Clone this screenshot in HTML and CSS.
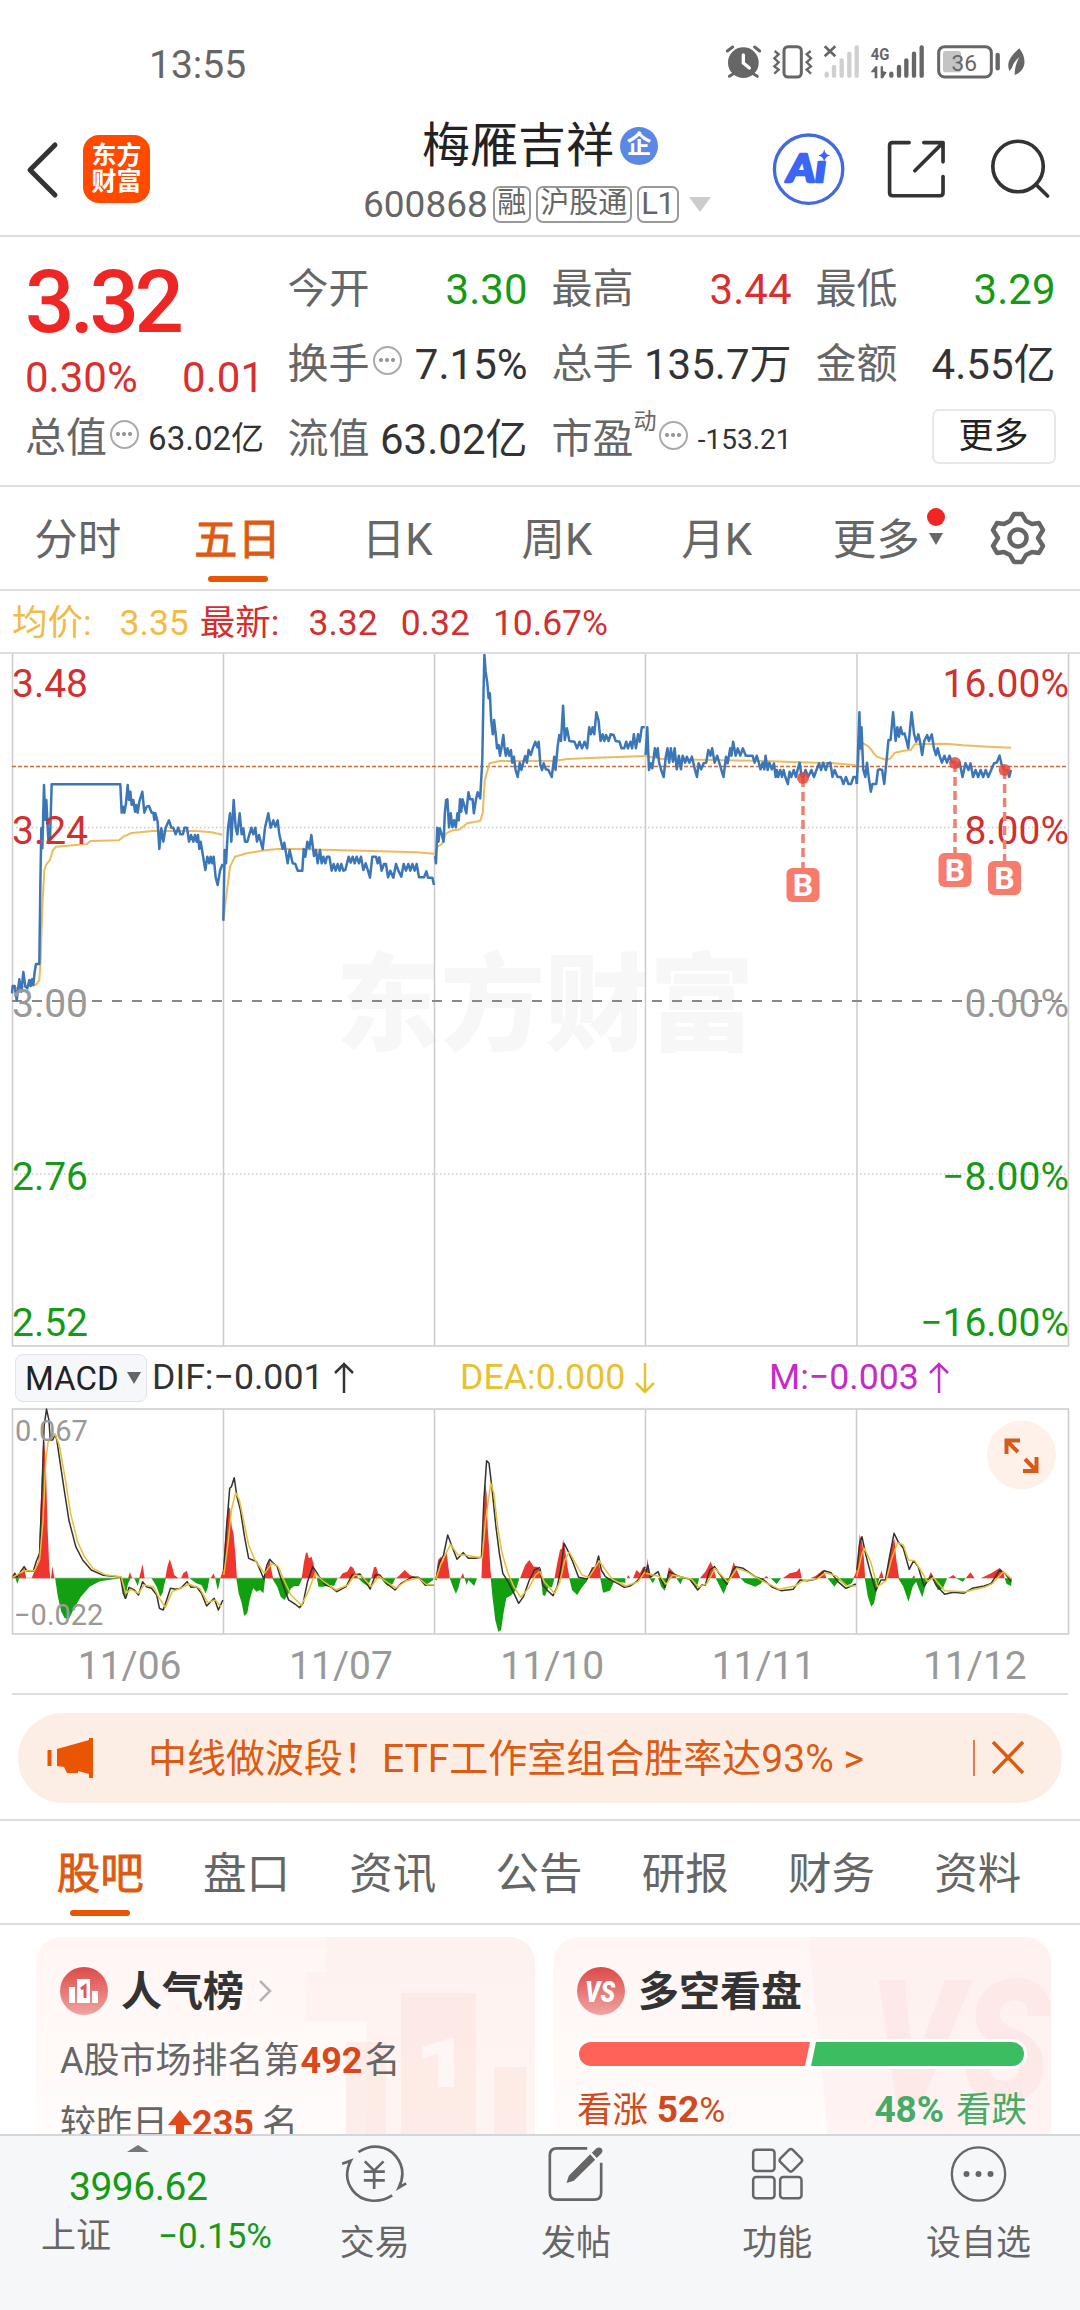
FILE: index.html
```html
<!DOCTYPE html>
<html lang="zh-CN">
<head>
  <meta charset="UTF-8">
  <title>梅雁吉祥 600868</title>
  <meta name="viewport" content="width=device-width, initial-scale=1.0">
  <link rel="stylesheet" href="styles.css">
</head>
<body>

  <div class="status-bar">
    <span class="clock">13:55</span>
    <svg class="status-icons" viewBox="0 35 930 120">
      <g fill="#666">
        <circle cx="70" cy="97" r="46"/>
        <path d="M38 132L28 138M102 132L112 138M22 62L38 50M104 50L119 62" stroke="#666" stroke-width="9" stroke-linecap="round"/>
        <path d="M70 74V98L88 113" fill="none" stroke="#fff" stroke-width="10" stroke-linecap="round"/>
      </g>
      <g fill="none" stroke="#666" stroke-width="9">
        <rect x="192" y="49" width="52" height="91" rx="12"/>
        <path d="M164 62L176 72L163 84L176 96L163 108L176 118L163 130M272 62L260 72L273 84L260 96L273 108L260 118L273 130" stroke-width="7"/>
      </g>
      <path d="M314 48L346 78M346 48L314 78" stroke="#666" stroke-width="8"/>
      <g stroke="#d0d0d0" stroke-width="13" stroke-linecap="round">
        <path d="M320 130V136M342 110V136M365 90V136M388 70V136M410 51V136"/>
      </g>
      <text x="452" y="88" class="net-text" textLength="56" lengthAdjust="spacingAndGlyphs">4G</text>
      <path d="M452 126L466 108H472V144H464V126ZM482 108H489V122L500 126L489 144H482Z" fill="#666"/>
      <g stroke="#666" stroke-width="13" stroke-linecap="round">
        <path d="M514 130V136M537 110V136M559 90V136M582 70V136M605 51V136"/>
      </g>
      <rect x="656" y="49" width="158" height="91" rx="18" fill="none" stroke="#666" stroke-width="9"/>
      <rect x="669" y="62" width="54" height="64" rx="8" fill="#c4c4c4"/>
      <text x="733" y="121" class="battery-text" text-anchor="middle">36</text>
      <path d="M833 74V114" stroke="#666" stroke-width="13" stroke-linecap="round"/>
      <path d="M898 54C872 78 858 96 868 122L876 112C880 98 888 90 898 80C890 96 884 110 884 134C916 122 924 88 898 54Z" fill="#666"/>
    </svg>
  </div>

  <header class="header">
    <svg class="back" viewBox="0 0 36 60"><path d="M31 5L6 30L31 55" fill="none" stroke="#333" stroke-width="5" stroke-linecap="round" stroke-linejoin="round"/></svg>
    <div class="app-logo">东方<br>财富</div>
    <div class="title">
      <div class="stock-name">梅雁吉祥<span class="company">企</span></div>
      <div class="stock-code">600868<span class="tag first">融</span><span class="tag">沪股通</span><span class="tag">L1</span><i class="caret"></i></div>
    </div>
    <svg class="header-icons" viewBox="150 300 850 235">
      <circle cx="265" cy="418" r="103" fill="#fff" stroke="#4169e1" stroke-width="10"/>
      <text x="200" y="456" class="ai-text" textLength="118" lengthAdjust="spacingAndGlyphs">Aı</text>
      <path d="M312 358Q315 374 330 377Q315 380 312 396Q309 380 294 377Q309 374 312 358Z" fill="#3b66f5"/>
      <g fill="none" stroke="#333" stroke-width="11" stroke-linecap="round" stroke-linejoin="round">
        <path d="M568 338H518Q509 338 509 347V489Q509 498 518 498H661Q670 498 670 489V440M612 338H670V396M670 338L585 423"/>
        <circle cx="896" cy="410" r="76"/>
        <path d="M950 464L985 499"/>
      </g>
    </svg>
  </header>

  <section class="quote">
    <div class="quote-main">
      <div class="price">3.32</div>
      <div class="change"><span>0.30%</span><span>0.01</span></div>
      <div class="cell small"><span class="label">总值<i class="dots"></i></span><span class="value">63.02亿</span></div>
    </div>
    <div class="quote-grid">
      <div class="cell"><span class="label">今开</span><span class="value green">3.30</span></div>
      <div class="cell"><span class="label">最高</span><span class="value red">3.44</span></div>
      <div class="cell"><span class="label">最低</span><span class="value green">3.29</span></div>
      <div class="cell"><span class="label">换手<i class="dots"></i></span><span class="value">7.15%</span></div>
      <div class="cell"><span class="label">总手</span><span class="value">135.7万</span></div>
      <div class="cell"><span class="label">金额</span><span class="value">4.55亿</span></div>
      <div class="cell"><span class="label">流值</span><span class="value">63.02亿</span></div>
      <div class="cell tiny"><span class="label">市盈<sup>动</sup><i class="dots"></i></span><span class="value">-153.21</span></div>
      <div class="cell end"><span class="more-btn">更多</span></div>
    </div>
  </section>

  <nav class="period-tabs">
    <span>分时</span>
    <span class="active">五日</span>
    <span>日K</span>
    <span>周K</span>
    <span>月K</span>
    <span class="more">更多<i class="dot"></i><i class="arrow"></i></span>
    <svg class="gear" viewBox="-30 -30 60 60" fill="none" stroke="#666" stroke-width="4.5" stroke-linejoin="round">
      <path d="M-4 -24H4L8 -17L14 -14L21 -15L25 -8L20 0L25 8L21 15L14 14L8 17L4 24H-4L-8 17L-14 14L-21 15L-25 8L-20 0L-25 -8L-21 -15L-14 -14L-8 -17Z"/>
      <circle r="8.5"/>
    </svg>
  </nav>

  <div class="chart-info">
    <span class="avg">均价:</span><span class="avg n1">3.35</span>
    <span class="l2">最新:</span><span class="n2">3.32</span><span class="n3">0.32</span><span class="n4">10.67%</span>
  </div>

  <svg class="price-chart" viewBox="0 654 1080 693">
    <text x="336" y="1042" class="watermark" textLength="418" lengthAdjust="spacingAndGlyphs">东方财富</text>
    <g class="grid-line">
      <path d="M12.5 654V1346H1068.5V654M223.5 654V1346M434.5 654V1346M645.5 654V1346M857 654V1346"/>
      <path d="M12 827.5H1068M12 1174H1068" stroke-dasharray="1.5 2.5"/>
    </g>
    <path d="M12 1001H1068" stroke="#888" stroke-width="2" stroke-dasharray="10 10"/>
    <path d="M12 766.5H1068" stroke="#cc6a3c" stroke-width="1.6" stroke-dasharray="4 2"/>

    <!-- average price -->
    <g class="line avg-line">
      <g transform="translate(0 640) scale(.33333)">
        <polyline points="40,1045 104,1036 112,1030 118,1020 122,960 127,800 133,690 138,675 150,660 158,632 168,620 260,612 272,603 357,601 370,590 395,579 460,573 590,573 635,577 667,584"/>
        <polyline points="670,842 680,760 690,680 705,650 740,640 800,630 845,626 920,628 1250,637 1302,641"/>
      </g>
      <g transform="translate(420 640) scale(.4209 .33333)">
        <polyline points="36,645 42,620 52,612 62,580 75,572 95,568 112,550 143,543 149,520 154,420 165,370 190,363 320,362 350,357 420,353 534,348"/>
        <polyline points="536,348 570,356 600,358 820,363 900,367 985,370 1036,376"/>
        <polyline points="1039,400 1045,330 1050,308 1066,320 1085,350 1108,360 1118,355 1128,338 1150,332 1166,330 1175,313 1250,311 1290,316 1350,320 1404,323"/>
      </g>
    </g>

    <!-- price -->
    <g class="line price-line">
      <g transform="translate(0 640) scale(.33333)">
        <polyline points="36,1060 38,1038 44,1038 50,1080 58,1018 64,1055 70,996 76,1040 82,1045 88,1020 92,1038 96,1018 100,1035 104,995 108,972 118,972 121,735 124,565 127,625 132,435 136,540 139,480 145,600 150,600 155,433 361,433 365,518 369,500 373,518 378,490 383,435 387,480 391,455 395,495 400,480 405,515 409,495 413,518 418,485 427,455 433,518 440,500 447,498 455,518 460,518 463,540 466,520 473,545 478,627 484,565 490,605 497,563 507,541 514,563 520,563 527,583 535,563 541,583 549,583 553,563 561,563 567,605 573,585 580,605 585,585 590,605 594,585 598,627 602,605 616,690 622,650 628,670 632,650 637,670 641,650 647,712 653,735 660,692 668,672"/>
        <polyline points="670,842 674,630 678,670 684,565 690,520 694,605 701,480 707,563 712,583 719,520 725,583 730,565 735,605 742,605 754,563 760,583 766,563 771,605 777,585 788,627 795,563 805,520 812,563 820,541 826,560 833,541 838,583 843,605 848,627 853,608 863,670 869,630 878,670 886,672 893,692 907,692 911,627 916,650 922,605 928,625 934,585 942,648 948,630 953,670 960,630 965,670 970,650 976,670 981,650 988,650 995,692 1001,672 1007,692 1013,672 1019,692 1024,672 1030,692 1036,690 1046,650 1052,668 1058,650 1064,670 1070,650 1077,670 1083,650 1090,690 1097,670 1104,692 1110,713 1117,650 1128,650 1133,670 1138,652 1145,692 1152,672 1158,672 1164,712 1171,692 1180,713 1188,672 1195,692 1204,710 1211,672 1218,692 1225,672 1231,692 1237,672 1244,692 1250,672 1257,712 1272,712 1279,694 1284,713 1297,713 1302,735"/>
      </g>
      <g transform="translate(420 640) scale(.4209 .33333)">
        <polyline points="36,648 38,670 41,563 44,605 47,565 52,585 56,605 59,520 62,480 65,478 69,562 73,520 77,562 81,541 85,562 89,520 92,541 95,478 98,515 101,478 106,500 110,520 115,457 119,478 125,478 128,520 133,478 137,457 143,475 148,360 151,150 153,45 156,95 160,130 163,175 166,160 169,240 173,283 176,240 180,283 183,325 187,315 190,347 194,320 198,285 201,325 204,347 208,325 212,347 216,330 219,368 223,350 227,390 232,411 237,368 241,390 246,365 250,348 254,368 258,330 263,345 268,325 274,305 279,322 282,305 286,375 290,390 294,370 299,388 305,390 313,411 319,350 322,390 327,320 331,285 335,303 340,197 344,300 349,265 355,303 367,305 373,325 379,305 385,325 391,305 397,325 402,262 406,283 410,262 414,283 419,217 424,240 429,303 434,283 438,303 442,285 448,303 453,283 460,285 465,303 474,305 479,325 485,325 490,305 494,325 500,305 504,325 508,283 513,325 518,283 522,305 527,262 534,262"/>
        <polyline points="536,345 540,262 544,390 548,370 552,385 558,325 562,350 565,325 568,368 573,390 579,411 584,350 588,325 592,368 596,325 601,365 605,325 610,388 615,347 620,388 624,347 630,368 634,350 640,368 646,350 653,388 658,411 662,370 668,388 674,370 680,368 685,330 690,347 694,325 700,368 706,347 711,368 716,390 721,411 727,350 731,370 737,325 740,347 744,305 750,347 755,325 761,347 767,325 774,347 790,347 795,368 800,347 805,368 809,388 814,368 818,388 821,347 826,390 830,368 836,388 841,370 845,411 848,390 851,411 856,390 860,411 864,390 868,411 874,432 878,395 882,411 888,390 893,411 897,390 902,368 906,405 910,413 916,390 922,411 930,390 936,411 942,390 948,370 953,390 958,368 964,390 969,370 975,368 980,411 985,390 992,411 1000,411 1006,432 1012,411 1018,432 1024,432 1030,411 1036,411 1038,432"/>
        <polyline points="1038,432 1044,217 1046,325 1049,262 1053,388 1058,411 1062,368 1066,411 1071,455 1075,432 1084,432 1088,390 1092,388 1098,390 1103,432 1108,368 1113,300 1118,300 1124,217 1130,303 1134,262 1138,290 1142,262 1146,283 1151,280 1156,303 1160,325 1168,217 1174,283 1179,305 1184,283 1188,305 1193,345 1198,303 1205,285 1209,303 1216,283 1221,325 1226,345 1230,325 1235,350 1240,368 1246,347 1252,368 1258,347 1264,368 1270,365 1276,380 1282,368 1289,411 1296,370 1303,390 1308,370 1314,411 1320,390 1326,411 1332,390 1338,411 1344,390 1350,411 1357,390 1364,370 1370,368 1377,347 1382,375 1389,390 1396,390 1400,411 1404,390"/>
      </g>
    </g>

    <g class="axis">
      <text x="12" y="697" class="up">3.48</text>
      <text x="12" y="844" class="up">3.24</text>
      <text x="12" y="1017" class="flat">3.00</text>
      <text x="12" y="1190" class="down">2.76</text>
      <text x="12" y="1336" class="down">2.52</text>
      <g text-anchor="end">
        <text x="1069" y="697" class="up">16.00%</text>
        <text x="1069" y="844" class="up">8.00%</text>
        <text x="1069" y="1017" class="flat">0.00%</text>
        <text x="1069" y="1190" class="down">−8.00%</text>
        <text x="1069" y="1336" class="down">−16.00%</text>
      </g>
    </g>

    <!-- buy marks -->
    <g class="marks">
      <path d="M803 778V868M955 763V853M1004.600 770V861"/>
      <circle cx="803" cy="778" r="6"/><circle cx="955" cy="763" r="6"/><circle cx="1004.600" cy="770" r="6"/>
      <rect x="786.500" y="868" width="33" height="34" rx="6"/><text x="803" y="896">B</text>
      <rect x="938.500" y="853" width="33" height="34" rx="6"/><text x="955" y="881">B</text>
      <rect x="988" y="861" width="33" height="34" rx="6"/><text x="1004.500" y="889">B</text>
    </g>
  </svg>

  <div class="macd-legend">
    <span class="macd-btn">MACD<i class="arrow"></i></span>
    <span class="dif">DIF:−0.001<svg class="trend" viewBox="0 0 20 32"><path d="M10 31V2M1 11L10 2L19 11"/></svg></span>
    <span class="dea">DEA:0.000<svg class="trend" viewBox="0 0 20 32"><path d="M10 1V30M1 21L10 30L19 21"/></svg></span>
    <span class="m">M:−0.003<svg class="trend" viewBox="0 0 20 32"><path d="M10 31V2M1 11L10 2L19 11"/></svg></span>
  </div>

  <svg class="macd-chart" viewBox="0 1408 1080 227">
    <g class="grid-line">
      <path d="M12.500 1409H1068.500V1634H12.500ZM223.500 1409V1634M434.500 1409V1634M645.500 1409V1634M856.500 1409V1634"/>
    </g>
    <path d="M12 1578H472" stroke="#e9b7ad" stroke-width="1"/>
    <g transform="translate(0 1340) scale(.34439 .33333)">
      <path class="bar-up" d="M36 715L43 697L50 715ZM52 715L60 690L64 700L70 680L76 715ZM92 715L105 680L112 660L118 500L125 310L129 305L134 400L138 560L143 680L146 715ZM148 715L152 678L158 715ZM372 715L377 696L384 715ZM404 715L414 672L420 715ZM480 715L486 680L493 657L500 680L506 705L518 715ZM526 715L532 700L543 692L548 715ZM612 715L620 700L625 715ZM640 715L647 690L652 620L658 540L662 500L668 505L673 560L678 580L684 650L688 715ZM768 715L776 680L783 658L788 690L793 715ZM876 715L882 670L888 640L892 636L897 655L905 650L912 680L917 715ZM985 715L995 700L1008 695L1018 678L1026 684L1032 700L1040 715ZM1078 715L1086 682L1092 680L1098 700L1110 715ZM1150 715L1160 706L1175 690L1190 705L1215 715ZM1265 715L1272 660L1280 650L1285 670L1296 632L1302 680L1306 715ZM1338 715L1344 698L1349 715ZM1398 715L1402 600L1406 480L1409 430L1413 460L1416 560L1420 620L1424 690L1427 715ZM1510 715L1525 675L1537 660L1550 680L1560 680L1568 690V715Z"/>
      <path class="bar-down" d="M45 715L50 732L56 715ZM160 715L168 770L178 815L188 835L200 837L215 805L235 770L260 740L290 724L330 718L350 715L355 740L361 778L366 760L372 730L380 715ZM390 715L400 738L406 715ZM440 715L455 740L465 770L472 760L478 730L482 715ZM550 715L570 730L585 735L597 760L603 745L608 715ZM625 715L632 750L636 735L640 715ZM686 715L693 760L702 790L709 828L718 820L725 780L735 745L745 755L755 750L765 760L770 715ZM790 715L805 740L815 770L826 780L838 760L845 745L855 738L868 738L878 715ZM920 715L925 740L940 740L955 735L970 738L980 715ZM1040 715L1055 730L1068 738L1078 715ZM1105 715L1125 738L1140 732L1148 715ZM1220 715L1235 736L1258 720V715ZM1306 715L1315 740L1324 762L1332 740L1338 715ZM1349 715L1355 735L1360 720L1377 738L1385 715ZM1425 715L1430 770L1438 840L1447 875L1455 870L1462 820L1470 775L1485 765L1498 750L1508 715Z"/>
      <g class="macd-line dif-line">
        <polyline points="36,712 43,700 50,712 60,695 70,680 78,693 97,693 105,665 115,640 122,450 128,260 135,207 142,240 146,300 153,300 160,283 165,300 172,350 185,440 200,540 220,620 240,660 265,690 300,706 350,711 358,760 365,775 375,742 390,750 402,765 414,725 425,740 440,745 455,765 463,805 474,810 487,770 495,745 510,748 525,745 543,725 555,742 570,740 585,760 600,798 612,785 622,775 634,810 647,780"/>
        <polyline points="650,690 658,560 667,445 672,440 680,413 688,470 698,510 710,590 722,655 745,665 766,717 775,675 783,658 792,668 805,680 820,730 838,780 860,795 870,803 880,790 893,725 908,680 918,695 930,715 945,735 960,740 978,755 1005,740 1022,705 1045,702 1062,725 1075,747 1090,705 1103,705 1120,728 1147,750 1165,730 1195,712 1215,712 1235,736 1260,736"/>
        <polyline points="1266,720 1275,670 1288,645 1300,585 1312,618 1327,658 1345,638 1360,655 1380,655 1398,652 1405,480 1413,362 1420,370 1428,440 1440,560 1450,640 1460,700 1475,725 1490,755 1506,790 1520,770 1537,720 1552,690 1568,682"/>
      </g>
      <g class="macd-line dea-line">
        <polyline points="36,712 70,692 100,692 115,660 125,540 133,360 140,305 160,283 172,315 190,420 205,520 225,605 245,650 270,685 305,704 352,711 365,760 380,748 402,760 418,735 445,740 460,770 480,802 500,755 530,742 548,732 580,745 603,788 625,780 642,800"/>
        <polyline points="650,705 662,610 672,510 684,458 695,480 708,545 722,615 740,660 768,700 790,670 808,680 822,715 845,765 875,796 895,755 915,700 940,725 975,750 1010,735 1030,705 1050,708 1078,740 1100,708 1125,728 1150,744 1180,722 1215,714 1240,735 1260,735"/>
        <polyline points="1266,718 1280,672 1308,613 1330,645 1350,645 1380,650 1400,653 1410,540 1425,430 1434,460 1445,560 1458,640 1475,700 1492,740 1512,772 1535,745 1555,705 1568,694"/>
      </g>
    </g>
    <g transform="translate(540 1340) scale(.34439 .33333)">
      <path class="bar-up" d="M0 715V682L4 715ZM42 715L50 670L58 630L64 625L67 598L73 630L80 680L86 715ZM142 715L150 682L162 680L169 660L175 690L177 715ZM252 715L256 705L262 715ZM270 715L280 690L290 700L300 680L309 690L312 655L316 690L320 715ZM368 715L374 682L382 690L390 700L397 715ZM464 715L480 695L488 680L495 665L502 680L512 715ZM550 715L556 690L562 667L568 680L582 715ZM650 715L657 708L664 715ZM705 715L725 700L745 695L754 684L760 715ZM785 715L800 708L822 690L832 715ZM910 715L918 695L924 650L928 583L936 610L941 660L944 715ZM983 715L992 692L998 715ZM1003 715L1012 665L1020 620L1029 595L1034 655L1043 715ZM1080 715L1086 706L1090 715ZM1127 715L1135 696L1144 715ZM1185 715L1200 705L1210 715ZM1236 715L1250 697L1262 715ZM1280 715L1310 700L1335 684L1345 695L1349 715Z"/>
      <path class="bar-down" d="M3 715L8 765L15 768L24 742L35 742L42 715ZM85 715L93 750L108 765L120 745L135 725L140 715ZM175 715L183 758L203 752L215 725L248 728V715ZM318 715L328 730L335 715ZM343 715L352 740L362 752L370 725L375 715ZM396 715L408 733L414 718L430 715L455 745L462 715ZM510 715L525 745L533 762L540 745L550 715ZM582 715L595 728L625 740L640 732L652 715ZM670 715L687 732L700 715ZM835 715L855 740L868 720L888 738L905 730L912 715ZM943 715L952 770L962 800L970 790L978 750L985 715ZM1040 715L1055 740L1070 785L1082 740L1092 725L1110 772L1120 735L1130 715ZM1140 715L1155 750L1170 745L1182 715ZM1208 715L1228 725L1236 715ZM1349 715L1355 732L1368 738L1370 715Z"/>
      <g class="macd-line dif-line">
        <polyline points="0,685 8,735 20,750 38,767 50,740 60,690 70,610 80,630 95,665 112,712 137,717 150,690 162,680 170,648 178,690 190,710 205,720 225,730 245,742 262,738 280,725 293,710 305,680"/>
        <polyline points="307,700 313,675 320,712 343,695 352,720 363,742 375,695 400,708 435,718 458,750 470,735 480,735 493,690 507,680 520,700 543,733 560,690 568,680 590,685 625,710 650,720 675,742 700,752 735,748 755,720 775,722 800,718 825,692 845,698 865,725 888,745 900,740 917,732"/>
        <polyline points="920,690 928,610 935,590 945,640 960,700 975,752 990,720 1003,720 1015,650 1028,580 1040,605 1055,625 1072,688 1085,662 1098,680 1115,738 1137,708 1150,735 1175,763 1200,757 1230,760 1255,745 1290,738 1310,730 1335,690 1350,700 1368,725"/>
      </g>
      <g class="macd-line dea-line">
        <polyline points="0,694 12,725 42,760 58,725 72,660 85,636 100,665 122,705 142,712 172,663 190,690 210,718 250,738 285,725 305,695"/>
        <polyline points="307,700 320,703 350,710 366,733 385,705 440,718 460,742 485,730 508,685 545,726 572,685 600,695 650,725 695,748 740,738 765,722 805,716 830,698 860,708 890,737 917,738"/>
        <polyline points="920,710 935,640 942,625 960,665 980,740 1005,722 1020,660 1038,608 1055,615 1070,660 1088,662 1105,690 1125,725 1142,712 1175,752 1235,755 1290,742 1315,730 1345,695 1368,715"/>
      </g>
    </g>
    <text x="15" y="1441" class="macd-axis">0.067</text>
    <text x="14" y="1625" class="macd-axis">−0.022</text>
    <circle cx="1021.500" cy="1455" r="34.500" fill="#fef1ea"/>
    <path d="M1006.500 1454V1440.500H1020M1007 1441L1018 1452M1023 1471H1036.500V1457M1036 1470.500L1025 1459" fill="none" stroke="#d65a1a" stroke-width="4"/>
  </svg>

  <div class="dates"><span>11/06</span><span>11/07</span><span>11/10</span><span>11/11</span><span>11/12</span></div>

  <div class="banner-wrap">
    <div class="banner">
      <svg class="horn" viewBox="0 0 48 42"><path d="M2.500 13V29" stroke="#ea5504" stroke-width="4"/><path d="M10 12L42 3V1H46V41H42V37L31 34V36L20 36L17 30L10 29Z" fill="#ea5504"/></svg>
      <span class="banner-text">中线做波段！ETF工作室组合胜率达93% &gt;</span>
      <svg class="close" viewBox="0 0 54 40"><path d="M2 2V38" stroke="#d65a1a" stroke-width="1.500"/><path d="M21 4L51 35M51 4L21 35" stroke="#dd5a12" stroke-width="3.500"/></svg>
    </div>
  </div>

  <nav class="sub-tabs">
    <span class="active">股吧</span>
    <span>盘口</span>
    <span>资讯</span>
    <span>公告</span>
    <span>研报</span>
    <span>财务</span>
    <span>资料</span>
  </nav>

  <section class="cards">
    <div class="card">
      <svg class="card-bg" viewBox="0 0 499 200">
        <path d="M290 0H499V200H330V85H270V35H290Z" fill="#fdeeeb" opacity=".55"/>
        <path d="M310 105H350V200H310ZM365 56H440V200H365ZM458 130H490V200H458Z" fill="#fce4e0" opacity=".6"/>
        <path d="M386 110L418 100V150H402V116L386 122Z" fill="#fef6f4"/>
      </svg>
      <div class="card-title">
        <svg class="round-icon" viewBox="0 0 48 48"><defs><linearGradient id="red" x2="0" y2="1"><stop stop-color="#dc4a48"/><stop offset="1" stop-color="#f0a5a2"/></linearGradient></defs><circle cx="24" cy="24" r="24" fill="url(#red)"/><path d="M9 20H15V36H9ZM17 12H30V36H17ZM32 24H38V36H32Z" fill="#fff"/><path d="M21 22L25 19V31" fill="none" stroke="#dc5a58" stroke-width="3"/></svg>
        人气榜
        <svg class="chevron" viewBox="0 0 14 24"><path d="M2 2L12 12L2 22" fill="none" stroke="#b5b5b5" stroke-width="2.500"/></svg>
      </div>
      <p class="rank">A股市场排名第<b>492</b>名</p>
      <p class="rank second">较昨日<svg class="up-arrow" viewBox="0 0 24 28"><path d="M12 0L24 15H16V28H8V15H0Z" fill="#e2481a"/></svg><b>235</b> 名</p>
    </div>
    <div class="card">
      <svg class="card-bg" viewBox="0 0 498 200">
        <path d="M256 0H498V200H275Z" fill="#fdeeec" opacity=".6"/>
        <text x="316" y="164" class="vs-bg" textLength="182" lengthAdjust="spacingAndGlyphs">VS</text>
      </svg>
      <div class="card-title">
        <svg class="round-icon" viewBox="0 0 48 48"><circle cx="24" cy="24" r="24" fill="url(#red)"/><text x="23" y="35" class="vs-text" text-anchor="middle" textLength="30" lengthAdjust="spacingAndGlyphs">VS</text></svg>
        多空看盘
      </div>
      <div class="vote-bar"><i class="bull"></i><i class="bear"></i></div>
      <div class="vote-text"><span class="bull-text">看涨 <b>52</b>%</span><span class="bear-text"><b>48%</b> 看跌</span></div>
    </div>
  </section>

  <footer class="bottom-nav">
    <div class="index">
      <i class="tri"></i>
      <div class="index-value">3996.62</div>
      <div class="index-row"><span>上证</span><span class="green">−0.15%</span></div>
    </div>
    <div class="nav-item">
      <svg viewBox="67 30 200 198" fill="none" stroke="#666" stroke-width="8">
        <path d="M119 66C158 40 206 46 232 80C254 108 256 140 240 173L262 160M220 196C180 222 128 216 102 182C82 156 80 124 96 92L70 101"/>
        <path d="M138 94L166 122L194 94M166 122V177M135 125H198M135 151H198"/>
      </svg>
      交易
    </div>
    <div class="nav-item">
      <svg viewBox="671 30 200 198" fill="none" stroke="#666" stroke-width="8">
        <path d="M806 55H715Q694 55 694 76V188Q694 209 715 209H827Q848 209 848 188V98"/>
        <path d="M815 73L830 89L766 152L744 159L751 137ZM820 68L834 55Q843 49 850 56Q855 63 849 70L835 84Z" fill="#666" stroke="none"/>
      </svg>
      发帖
    </div>
    <div class="nav-item">
      <svg viewBox="1274 30 200 198" fill="none" stroke="#666" stroke-width="7.500">
        <rect x="1301" y="59" width="64" height="64" rx="9"/>
        <rect x="1301" y="141" width="64" height="64" rx="9"/>
        <rect x="1382" y="141" width="64" height="64" rx="9"/>
        <rect x="1388" y="65" width="52" height="52" rx="8" transform="rotate(45 1414 91)"/>
      </svg>
      功能
    </div>
    <div class="nav-item">
      <svg viewBox="0 30 200 198"><circle cx="100" cy="132" r="80" fill="none" stroke="#666" stroke-width="7"/><g fill="#666"><circle cx="64" cy="132" r="9"/><circle cx="100" cy="132" r="9"/><circle cx="136" cy="132" r="9"/></g></svg>
      设自选
    </div>
  </footer>

</body>
</html>
```
FILE: styles.css
```css
* { box-sizing: border-box; }

body {
  margin: 0;
  width: 1080px;
  height: 2310px;
  overflow: hidden;
  background: #fff;
  color: #333;
  font-family: Roboto, "Noto Sans CJK SC", sans-serif;
  line-height: 1;
}

i { font-style: normal; }
svg { display: block; flex: none; }
.red { color: #d9302f; }
.green { color: #169a16; }

/* status bar + header */
.status-bar {
  height: 100px;
  padding: 24px 0 0 149px;
  display: flex;
  align-items: center;
}

.clock { margin-top: 6px; font-size: 39px; color: #666; }

.status-icons {
  width: 310px;
  height: 40px;
  margin-left: auto;
  margin-right: 50px;
}

.net-text { font-size: 50px; font-weight: 700; fill: #666; }
.battery-text { font-size: 68px; fill: #666; }

.header {
  height: 137px;
  display: flex;
  position: relative;
  align-items: flex-start;
  padding-left: 24px;
  border-bottom: 2px solid #ddd;
}

.back { width: 36px; height: 60px; margin-top: 40px; }

.app-logo {
  width: 67px;
  height: 68px;
  margin: 35px 0 0 23px;
  padding-top: 8px;
  border-radius: 16px;
  background: #ff4a00;
  color: #fff;
  font-size: 25px;
  font-weight: 700;
  line-height: 26px;
  text-align: center;
}

.title { margin-left: 213px; width: 400px; padding-top: 20px; }

.stock-name {
  display: flex;
  align-items: center;
  height: 52px;
  padding-left: 59px;
  font-size: 48px;
  color: #222;
}

.company {
  width: 38px;
  height: 38px;
  margin-left: 6px;
  border-radius: 50%;
  background: #5b87e5;
  color: #fff;
  font-size: 25px;
  font-weight: 700;
  line-height: 36px;
  text-align: center;
}

.stock-code {
  display: flex;
  align-items: center;
  height: 40px;
  margin-top: 12px;
  font-size: 37px;
  color: #666;
}

.tag {
  height: 37px;
  margin-left: 5px;
  padding: 0 2.500px;
  border: 2px solid #999;
  border-radius: 7px;
  font-size: 29px;
  line-height: 31px;
}

.tag:nth-of-type(3) { font-size: 31px; letter-spacing: -.5px; }

.caret {
  margin-left: 10px;
  border: 11px solid transparent;
  border-top: 15px solid #ccc;
  border-bottom: 0;
}

.header-icons {
  position: absolute;
  left: 770px;
  top: 30px;
  width: 283px;
  height: 78px;
}

.ai-text {
  font-family: Lato, sans-serif;
  font-size: 116px;
  font-weight: 900;
  font-style: italic;
  fill: #3b66f5;
  stroke: #3b66f5;
  stroke-width: 7px;
  stroke-linejoin: round;
}

/* quote */
.quote {
  height: 250px;
  display: flex;
  padding: 15px 0 0 25px;
  border-bottom: 2px solid #ddd;
}

.quote-main { width: 262.500px; }

.price {
  height: 101px;
  line-height: 101px;
  font-size: 87px;
  font-weight: 500;
  letter-spacing: -4.500px;
  color: #ee2624;
}

.change {
  display: flex;
  justify-content: space-between;
  width: 239px;
  height: 48px;
  line-height: 50px;
  font-size: 42px;
  color: #d9302f;
}

.quote-grid {
  display: grid;
  grid-template-columns: repeat(3, 240px);
  grid-auto-rows: 75px;
  column-gap: 24px;
  flex: 1;
}

.cell {
  display: flex;
  align-items: center;
  justify-content: space-between;
  height: 75px;
  font-size: 42px;
  white-space: nowrap;
}

.label { display: flex; align-items: center; font-size: 41px; color: #666; }
.small { width: 239px; }
.small .value { font-size: 33px; }
.tiny .value { font-size: 28px; }
.end { justify-content: flex-end; }

.label sup { font-size: 23px; align-self: flex-start; margin-top: -9px; }

.dots {
  width: 29px;
  height: 29px;
  margin: -8px 0 0 3px;
  border: 2.500px solid #aaa;
  border-radius: 50%;
  background:
    radial-gradient(circle 2.200px at 6px 12px, #999 90%, transparent),
    radial-gradient(circle 2.200px at 12px 12px, #999 90%, transparent),
    radial-gradient(circle 2.200px at 18px 12px, #999 90%, transparent);
}

.tiny .dots { margin-left: 2px; }

.more-btn {
  width: 124px;
  height: 55px;
  margin-top: -7px;
  border: 2px solid #e8e8e8;
  border-radius: 7px;
  font-size: 35px;
  line-height: 51px;
  text-align: center;
  color: #222;
}

/* period tabs */
.period-tabs {
  height: 104px;
  display: flex;
  align-items: center;
  margin-left: -2px;
  border-bottom: 2px solid #ddd;
}

.period-tabs span {
  width: 159.700px;
  height: 100%;
  line-height: 107px;
  font-size: 43.500px;
  color: #666;
  text-align: center;
  position: relative;
}

.period-tabs .active, .sub-tabs .active {
  color: #dd5a12;
  -webkit-text-stroke: .8px #dd5a12;
}

.active::after {
  content: "";
  position: absolute;
  left: 50%;
  bottom: 7px;
  width: 60px;
  height: 6px;
  margin-left: -30px;
  border-radius: 3px;
  background: #ea5504;
}

.dot {
  position: absolute;
  left: 131px;
  top: 21px;
  width: 18px;
  height: 18px;
  border-radius: 50%;
  background: #ee2624;
}

.more .arrow { position: absolute; left: 133px; top: 46px; }

.arrow {
  border: 7px solid transparent;
  border-top: 12px solid #666;
  border-bottom: 0;
}

.gear { width: 60px; height: 60px; margin-left: 32px; }

.chart-info {
  height: 63px;
  display: flex;
  align-items: center;
  padding: 4px 0 0 12px;
  border-bottom: 2px solid #ddd;
  font-size: 35.500px;
  color: #d0302f;
}

.avg { color: #f2bb45; }
.n1 { margin-left: 28px; }
.l2 { margin-left: 11px; }
.n2 { margin-left: 29px; }
.n3, .n4 { margin-left: 23px; }

/* charts */
.price-chart { width: 1080px; height: 693px; }
.grid-line { fill: none; stroke: #ccc; stroke-width: 1.500; }
.line polyline { fill: none; stroke-width: 2; stroke-linejoin: round; vector-effect: non-scaling-stroke; }
.price-line { stroke: #3b76b8; }
.price-line polyline { stroke-width: 2.500; }
.avg-line { stroke: #edbb5c; }

.watermark {
  font-size: 106px;
  font-weight: 900;
  fill: #f7f7f7;
}

.axis { font-size: 39px; }
.up { fill: #d0302f; }
.down { fill: #169a16; }
.flat { fill: #999; }

.marks path { stroke: #f0806f; stroke-width: 3.500; stroke-dasharray: 9 5; }
.marks circle { fill: #e8483c; opacity: .85; }
.marks rect { fill: #f87c6b; }
.marks text { fill: #fff; font-size: 32px; font-weight: 700; text-anchor: middle; }

.macd-legend {
  height: 61px;
  display: grid;
  grid-template-columns: 137px 308px 309px 1fr;
  align-items: center;
  padding: 1px 0 0 15px;
  font-size: 35.700px;
}

.macd-legend span { display: flex; align-items: center; }

.macd-btn {
  width: 132px;
  height: 48px;
  padding-left: 9px;
  border: 1px solid #e2e3e8;
  border-radius: 8px;
  background: #f6f7fa;
  font-size: 33px;
  color: #222;
}

.macd-btn .arrow { margin-left: 8px; }
.dea { color: #e8c22e; }
.m { color: #c42bc9; }
.trend { width: 20px; height: 32px; margin-left: 10px; fill: none; stroke: currentColor; stroke-width: 2.500; }

.macd-chart { width: 1080px; height: 227px; }
.bar-up { fill: #ee3530; }
.bar-down { fill: #12a012; }
.macd-line polyline { fill: none; stroke-width: 1.500; stroke-linejoin: round; vector-effect: non-scaling-stroke; }
.dif-line { stroke: #333; }
.dea-line { stroke: #e8bf30; }
.macd-axis { font-size: 29px; fill: #999; }

.dates {
  height: 60px;
  margin: 0 12px;
  padding: 5px 0 0 12px;
  display: flex;
  align-items: center;
  border-bottom: 2px solid #ddd;
  font-size: 39px;
  color: #999;
}

.dates span { width: 211.300px; flex: none; text-align: center; }

/* banner */
.banner-wrap { height: 126px; padding: 18px 18px 0; border-bottom: 2px solid #ddd; }

.banner {
  height: 90px;
  display: flex;
  align-items: center;
  padding: 0 36px 0 29px;
  border-radius: 45px;
  background: #fceee5;
  color: #dd5a12;
  font-size: 39px;
}

.horn { width: 48px; height: 42px; }
.banner-text { margin: 2px 0 0 53px; white-space: nowrap; }
.close { width: 54px; height: 40px; margin-left: auto; }

.sub-tabs {
  height: 104px;
  display: flex;
  padding: 0 29px 0 27px;
  border-bottom: 2px solid #ddd;
}

.sub-tabs span {
  flex: 1;
  position: relative;
  line-height: 108px;
  font-size: 43.500px;
  color: #666;
  text-align: center;
}

/* cards */
.cards {
  height: 209px;
  overflow: hidden;
  display: grid;
  grid-template-columns: 499px 498px;
  gap: 18px;
  padding: 12px 36px 0;
}

.card {
  position: relative;
  height: 230px;
  padding: 30px 26px 0 24px;
  border-radius: 26px;
  overflow: hidden;
  background: linear-gradient(#fff6f4, #fffdfc);
}

.card-bg { position: absolute; left: 0; top: 0; width: 100%; height: 200px; }
.card-title, .rank, .vote-bar, .vote-text { position: relative; }

.card-title {
  display: flex;
  align-items: center;
  height: 50px;
  font-size: 41px;
  font-weight: 700;
}

.round-icon { width: 48px; height: 48px; margin-right: 13px; margin-top: -2px; }
.chevron { width: 14px; height: 24px; margin-left: 14px; margin-top: -2px; }
.vs-text { font-size: 30px; font-weight: 900; font-style: italic; fill: #fff; }
.vs-bg { font-size: 170px; font-weight: 900; font-style: italic; fill: #fce6e4; opacity: .7; }

.rank {
  display: flex;
  align-items: center;
  height: 36px;
  margin: 26px 0 0;
  font-size: 36px;
  color: #666;
  white-space: pre;
}

.rank b { color: #d9481c; margin: 0 2px 0 1px; }
.rank.second { margin-top: 27px; }
.rank.second b { margin: 0 -1px 0 0; }
.up-arrow { width: 24px; height: 28px; }

.vote-bar {
  display: flex;
  width: 451px;
  height: 30px;
  margin: 22px 0 0 -1px;
  border: 3px solid #fff;
  border-radius: 15px;
  background: #fff;
  overflow: hidden;
}

.bull { width: 231px; background: #ff6357; clip-path: polygon(0 0, 100% 0, 226px 100%, 0 100%); }
.bear { flex: 1; background: #3dbd62; clip-path: polygon(6px 0, 100% 0, 100% 100%, 1px 100%); }

.vote-text {
  display: flex;
  justify-content: space-between;
  margin: 22px -2px 0 0;
  font-size: 35.500px;
  line-height: 38px;
}

.vote-text b { font-size: 37px; }
.bull-text { color: #cf4a1c; }
.bear-text { color: #45ab66; }
.bear-text b { margin-right: 3px; }

/* bottom nav */
.bottom-nav {
  height: 176px;
  display: flex;
  border-top: 2px solid #d5d6da;
  background: #f6f7f9;
}

.index { width: 274px; padding-top: 9px; }

.tri {
  display: block;
  width: 0;
  margin-left: 127px;
  border: 11px solid transparent;
  border-bottom: 7px solid #777;
  border-top: 0;
}

.index-value {
  margin: 15px 0 0 69px;
  font-size: 39px;
  line-height: 40px;
  letter-spacing: -.5px;
  color: #169a16;
}

.index-row {
  display: flex;
  justify-content: space-between;
  padding: 0 2px 0 41px;
  margin-top: 10px;
  font-size: 35px;
  line-height: 40px;
  color: #666;
}

.nav-item {
  width: 201.300px;
  display: flex;
  flex-direction: column;
  align-items: center;
  font-size: 35px;
  line-height: 40px;
  color: #666;
}

.nav-item svg { width: 67px; height: 66px; margin: 4px 0 18px; }
```
